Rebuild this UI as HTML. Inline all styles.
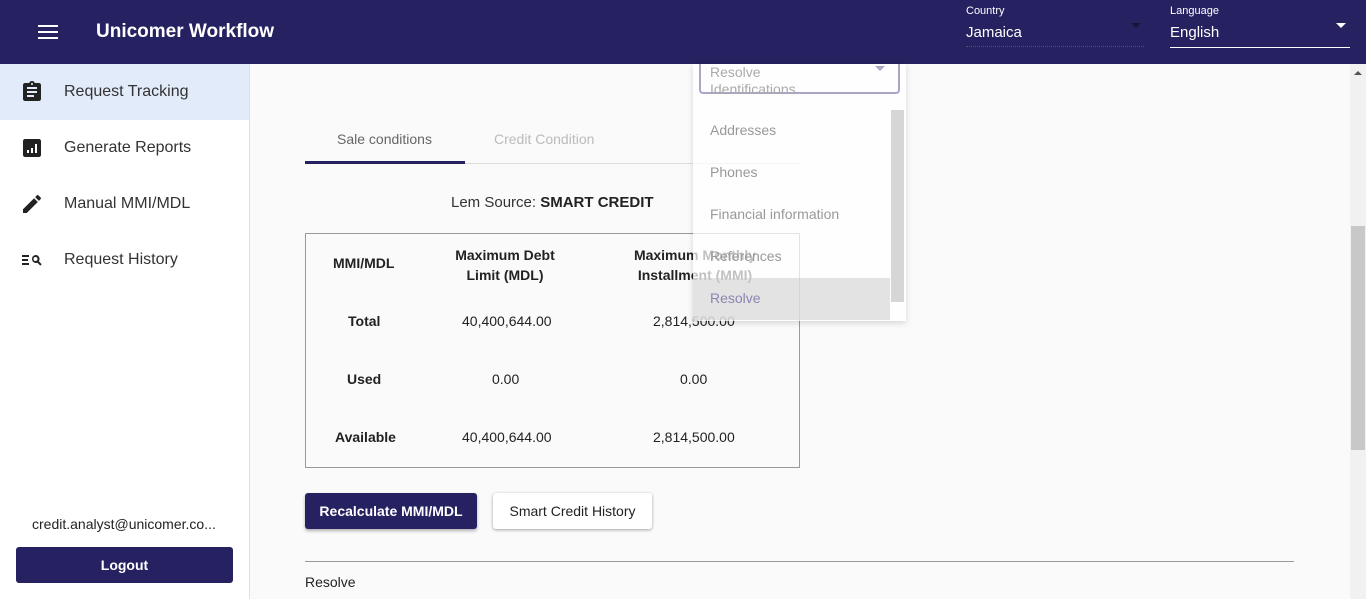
<!DOCTYPE html>
<html><head><meta charset="utf-8"><style>
*{box-sizing:border-box;margin:0;padding:0}
body{width:1366px;height:599px;overflow:hidden;font-family:"Liberation Sans",sans-serif;background:#fafafa;position:relative;color:#222}
.top{position:absolute;left:0;top:0;width:1366px;height:64px;background:#262261;color:#fff}
.abs{position:absolute}
.side{position:absolute;left:0;top:64px;width:250px;height:535px;background:#fff;border-right:1px solid #e0e0e0}
.item{position:absolute;left:0;width:249px;height:56px;font-size:16px;color:#333}
.item span{position:absolute;left:64px;top:19px}
.item svg{position:absolute;left:20px;top:16px}
</style></head><body>
<div class="top">
 <div class="abs" style="left:38px;top:25px;width:20px;height:2px;background:#fff;box-shadow:0 6px 0 #fff,0 12px 0 #fff"></div>
 <div class="abs" style="left:96px;top:21px;font-size:19px;font-weight:bold">Unicomer Workflow</div>
 <div class="abs" style="left:966px;top:5px;font-size:11px">Country</div>
 <div class="abs" style="left:966px;top:24px;font-size:15px">Jamaica</div>
 <div class="abs" style="left:1131px;top:23px;width:0;height:0;border-left:5px solid transparent;border-right:5px solid transparent;border-top:5px solid #151338"></div>
 <div class="abs" style="left:966px;top:46px;width:178px;border-top:1px dotted #555"></div>
 <div class="abs" style="left:1170px;top:5px;font-size:11px">Language</div>
 <div class="abs" style="left:1170px;top:24px;font-size:15px">English</div>
 <div class="abs" style="left:1336px;top:23px;width:0;height:0;border-left:5px solid transparent;border-right:5px solid transparent;border-top:5px solid #fff"></div>
 <div class="abs" style="left:1170px;top:47px;width:180px;height:1px;background:#fff"></div>
</div>
<div class="side">
 <div class="item" style="top:0;background:#e1ebf9"><svg width="24" height="24" viewBox="0 0 24 24"><path fill="#222" d="M19 3h-4.2C14.4 1.8 13.3 1 12 1s-2.4.8-2.8 2H5c-1.1 0-2 .9-2 2v14c0 1.1.9 2 2 2h14c1.1 0 2-.9 2-2V5c0-1.1-.9-2-2-2zm-7 0c.6 0 1 .4 1 1s-.4 1-1 1-1-.4-1-1 .4-1 1-1zm2 14H7v-2h7v2zm3-4H7v-2h10v2zm0-4H7V7h10v2z"/></svg><span>Request Tracking</span></div>
 <div class="item" style="top:56px"><svg width="24" height="24" viewBox="0 0 24 24"><path fill="#222" d="M19 3H5c-1.1 0-2 .9-2 2v14c0 1.1.9 2 2 2h14c1.1 0 2-.9 2-2V5c0-1.1-.9-2-2-2zM9 17H7v-3h2v3zm4 0h-2v-5h2v5zm4 0h-2V8h2v9z"/></svg><span>Generate Reports</span></div>
 <div class="item" style="top:112px"><svg width="24" height="24" viewBox="0 0 24 24"><path fill="#222" d="M3 17.25V21h3.75L17.81 9.94l-3.75-3.75L3 17.25zM20.71 7.04a1 1 0 000-1.41l-2.34-2.34a1 1 0 00-1.41 0l-1.83 1.83 3.75 3.75 1.83-1.83z"/></svg><span>Manual MMI/MDL</span></div>
 <div class="item" style="top:168px"><svg width="24" height="24" viewBox="0 0 24 24"><path fill="#222" d="M2 7h7v2H2zm0 4h6v2H2zm0 4h7v2H2zm13.5-8a4 4 0 013.3 6.3l2.9 2.9-1.4 1.4-2.9-2.9A4 4 0 1115.5 7zm0 2a2 2 0 100 4 2 2 0 000-4z"/></svg><span>Request History</span></div>
 <div class="abs" style="left:32px;top:452px;font-size:14px">credit.analyst@unicomer.co...</div>
 <div class="abs" style="left:16px;top:483px;width:217px;height:36px;background:#262261;color:#fff;border-radius:3px;font-size:14px;font-weight:bold;text-align:center;line-height:36px">Logout</div>
</div>
<div class="abs" style="left:1350px;top:64px;width:16px;height:535px;background:#f1f1f1"></div>
<div class="abs" style="left:1351px;top:226px;width:14px;height:224px;background:#c8c8c8"></div>
<div class="abs" style="left:1354px;top:71px;border-left:4px solid transparent;border-right:4px solid transparent;border-bottom:4px solid #555"></div>

<div class="abs" style="left:305px;top:163px;width:495px;height:1px;background:#ddd"></div>
<div class="abs" style="left:305px;top:161px;width:160px;height:3px;background:#262261"></div>
<div class="abs" style="left:337px;top:131px;font-size:14px;color:#666">Sale conditions</div>
<div class="abs" style="left:494px;top:131px;font-size:14px;color:#bbb">Credit Condition</div>
<div class="abs" style="left:451px;top:194px;font-size:15px;color:#333">Lem Source: <b style="color:#222">SMART CREDIT</b></div>
<div class="abs" style="left:305px;top:233px;width:495px;height:235px;border:1px solid #999"></div>
<div class="abs" style="left:333px;top:255px;font-size:14px;font-weight:bold">MMI/MDL</div>
<div class="abs" style="left:420px;top:245px;width:170px;font-size:14px;font-weight:bold;text-align:center;line-height:20px">Maximum Debt<br>Limit (MDL)</div>
<div class="abs" style="left:610px;top:245px;width:170px;font-size:14px;font-weight:bold;text-align:center;line-height:20px">Maximum Monthly<br>Installment (MMI)</div>
<div class="abs" style="left:348px;top:313px;font-size:14px;font-weight:bold">Total</div>
<div class="abs" style="left:462px;top:313px;font-size:14px">40,400,644.00</div>
<div class="abs" style="left:653px;top:313px;font-size:14px">2,814,500.00</div>
<div class="abs" style="left:347px;top:371px;font-size:14px;font-weight:bold">Used</div>
<div class="abs" style="left:492px;top:371px;font-size:14px">0.00</div>
<div class="abs" style="left:680px;top:371px;font-size:14px">0.00</div>
<div class="abs" style="left:335px;top:429px;font-size:14px;font-weight:bold">Available</div>
<div class="abs" style="left:462px;top:429px;font-size:14px">40,400,644.00</div>
<div class="abs" style="left:653px;top:429px;font-size:14px">2,814,500.00</div>
<div class="abs" style="left:305px;top:493px;width:172px;height:36px;background:#262261;color:#fff;border-radius:3px;font-size:14px;font-weight:bold;text-align:center;line-height:36px;box-shadow:0 2px 3px rgba(0,0,0,.3)">Recalculate MMI/MDL</div>
<div class="abs" style="left:493px;top:493px;width:159px;height:36px;background:#fff;border-radius:3px;font-size:14px;text-align:center;line-height:36px;box-shadow:0 1px 3px rgba(0,0,0,.35)">Smart Credit History</div>
<div class="abs" style="left:305px;top:561px;width:989px;height:1px;background:#999"></div>
<div class="abs" style="left:305px;top:574px;font-size:14px">Resolve</div>

<div class="abs" style="left:693px;top:64px;width:213px;height:257px;background:rgba(255,255,255,.72);box-shadow:0 2px 6px rgba(0,0,0,.15)"></div>
<div class="abs" style="left:699px;top:64px;width:201px;height:30px;border:2px solid #aaa6c8;border-top:none;border-radius:0 0 4px 4px"></div>
<div class="abs" style="left:710px;top:64px;font-size:14px;color:#aaa;line-height:17px">Resolve<br>Identifications</div>
<div class="abs" style="left:875px;top:66px;border-left:5px solid transparent;border-right:5px solid transparent;border-top:5px solid #aaa6c8"></div>
<div class="abs" style="left:891px;top:110px;width:13px;height:192px;background:#d6d6d6"></div>
<div class="abs" style="left:693px;top:278px;width:197px;height:42px;background:rgba(200,200,200,.5)"></div>
<div class="abs" style="left:710px;top:122px;font-size:14px;color:#999">Addresses</div>
<div class="abs" style="left:710px;top:164px;font-size:14px;color:#999">Phones</div>
<div class="abs" style="left:710px;top:206px;font-size:14px;color:#999">Financial information</div>
<div class="abs" style="left:710px;top:248px;font-size:14px;color:#999">References</div>
<div class="abs" style="left:710px;top:290px;font-size:14px;color:#8a86b0">Resolve</div>
</body></html>
